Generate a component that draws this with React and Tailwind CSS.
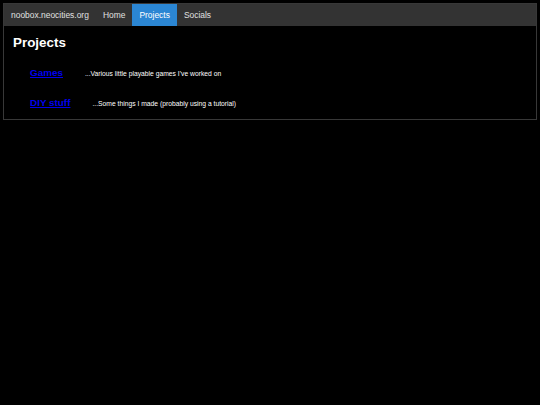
export default function App() {
  const font = { fontFamily: '"Liberation Sans", Arial, sans-serif' };
  const rows = [
    { name: "Games", desc: "...Various little playable games I've worked on" },
    { name: "DIY stuff", desc: "...Some things I made (probably using a tutorial)" },
  ];
  return (
    <div className="min-h-[405px] bg-black p-[3px]" style={font}>
      <div className="border border-[#383838] bg-black">
        <nav className="flex h-[22px] bg-[#333] text-[8.45px] text-[#e0e0e0]">
          <a className="flex items-center px-[7px]">noobox.neocities.org</a>
          <a className="flex items-center px-[7px]">Home</a>
          <a className="flex items-center bg-[#2b86d3] px-[7px] text-white">Projects</a>
          <a className="flex items-center px-[7px]">Socials</a>
        </nav>
        <div className="pl-[9px] pr-[8px] pt-[9px] pb-[10px]">
          <h2 className="text-[13.4px] font-bold leading-[15.4px] text-white">Projects</h2>
          <div className="mt-[17px] flex flex-col gap-[17.6px] pl-[17px]">
            {rows.map((r) => (
              <div key={r.name} className="flex items-baseline gap-[22px]">
                <a className="text-[9.9px] font-bold leading-[11.4px] text-[#0000ee] underline">{r.name}</a>
                <span className="text-[6.75px] text-white">{r.desc}</span>
              </div>
            ))}
          </div>
        </div>
      </div>
    </div>
  );
}
